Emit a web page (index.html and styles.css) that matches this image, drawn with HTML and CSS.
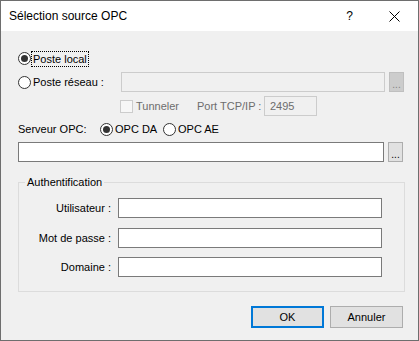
FILE: index.html
```html
<!DOCTYPE html>
<html lang="fr">
<head>
    <meta charset="UTF-8" />
    <title>Sélection source OPC</title>
    <link rel="stylesheet" href="styles.css">
</head>
<body>
<div class="window">
    <div class="titlebar">
        <span class="title">Sélection source OPC</span>
        <span class="help">?</span>
        <svg class="close" width="11" height="11" viewBox="0 0 11 11">
            <path d="M0.5 0.5 L10.5 10.5 M10.5 0.5 L0.5 10.5" stroke="#000" stroke-width="1" fill="none"/>
        </svg>
    </div>
    <div class="client">
        <div class="row row-local">
            <span class="radio checked"></span>
            <span class="label focus">Poste local</span>
        </div>
        <div class="row row-remote">
            <span class="radio"></span>
            <span class="label">Poste réseau :</span>
            <span class="textbox disabled remote-box"></span>
            <span class="browse disabled">...</span>
        </div>
        <div class="row row-tunnel">
            <span class="check disabled"></span>
            <span class="label muted tunnel-label">Tunneler</span>
            <span class="label muted port-label">Port TCP/IP :</span>
            <span class="textbox disabled port-box">2495</span>
        </div>
        <div class="row row-server">
            <span class="label server-label">Serveur OPC:</span>
            <span class="radio checked"></span>
            <span class="label da-label">OPC DA</span>
            <span class="radio"></span>
            <span class="label">OPC AE</span>
        </div>
        <div class="row row-path">
            <span class="textbox path-box"></span>
            <span class="browse">...</span>
        </div>
        <fieldset class="group">
            <legend>Authentification</legend>
            <div class="form">
                <span class="form-label">Utilisateur :</span>
                <span class="textbox"></span>
                <span class="form-label">Mot de passe :</span>
                <span class="textbox"></span>
                <span class="form-label">Domaine :</span>
                <span class="textbox"></span>
            </div>
        </fieldset>
        <div class="actions">
            <span class="button default">OK</span>
            <span class="button">Annuler</span>
        </div>
    </div>
</div>
</body>
</html>
```

FILE: styles.css
```css
body {
  margin: 0;
  font-family: "Segoe UI", "Liberation Sans", sans-serif;
  font-size: 11px;
  color: #000;
  background: #fff;
}

.window {
  box-sizing: border-box;
  width: 419px;
  height: 341px;
  border: 1px solid #6e6e6e;
  background-color: #f0f0f0;
  display: flex;
  flex-direction: column;
}

.titlebar {
  height: 30px;
  background-color: #fff;
  display: flex;
  align-items: center;
  padding-left: 8px;
  flex-shrink: 0;
}

.title {
  font-size: 12px;
  flex: 1;
}

.help {
  font-size: 12px;
  margin-right: 36px;
}

.close {
  margin-right: 18px;
}

.client {
  padding: 20px 13px 0 17px;
  display: flex;
  flex-direction: column;
}

.row {
  display: flex;
  align-items: center;
}

.row-local { height: 15px; }
.row-remote { height: 20px; margin-top: 6px; }
.row-tunnel { height: 20px; margin-top: 4px; }
.row-server { height: 16px; margin-top: 5px; }
.row-path { height: 20px; margin-top: 5px; }

.radio {
  box-sizing: border-box;
  width: 13px;
  height: 13px;
  border: 1px solid #333;
  border-radius: 50%;
  background-color: #fff;
  position: relative;
  flex-shrink: 0;
  margin-right: 2px;
}

.radio.checked::after {
  content: "";
  position: absolute;
  left: 2px;
  top: 2px;
  width: 7px;
  height: 7px;
  border-radius: 50%;
  background-color: #333;
}

.label {
  white-space: nowrap;
}

.focus {
  outline: 1px dotted #000;
  outline-offset: 1px;
}

.muted {
  color: #6d6d6d;
}

.textbox {
  box-sizing: border-box;
  height: 20px;
  border: 1px solid #7a7a7a;
  background-color: #fff;
  display: flex;
  align-items: center;
  padding-left: 5px;
}

.textbox.disabled {
  border-color: #cccccc;
  background-color: #f0f0f0;
  color: #6d6d6d;
}

.remote-box {
  width: 264px;
  margin-left: auto;
  margin-right: 4px;
}

.browse {
  box-sizing: border-box;
  width: 15px;
  height: 20px;
  border: 1px solid #adadad;
  background-color: #e1e1e1;
  font-size: 10px;
  text-align: center;
  line-height: 23px;
  flex-shrink: 0;
  margin-right: 1px;
}

.browse.disabled {
  border-color: #bfbfbf;
  background-color: #cccccc;
  color: #838383;
}

.check {
  box-sizing: border-box;
  width: 13px;
  height: 13px;
  border: 1px solid #cccccc;
  background-color: #f7f7f7;
  margin-left: 102px;
  margin-right: 3px;
}

.tunnel-label {
  width: 61px;
}

.port-label {
  width: 61px;
  margin-right: 6px;
}

.port-box {
  width: 53px;
}

.server-label {
  width: 82px;
}

.da-label {
  width: 48px;
}

.path-box {
  width: 366px;
  margin-right: 4px;
}

.group {
  box-sizing: border-box;
  margin: 13px 0 0 0;
  padding: 0;
  height: 117px;
  border: 1px solid #dcdcdc;
}

.group legend {
  padding: 0 2px;
  margin-left: 6px;
  line-height: 14px;
}

.form {
  display: grid;
  grid-template-columns: 92px 264px;
  column-gap: 7px;
  row-gap: 9.5px;
  align-items: center;
  margin-top: 9px;
}

.form-label {
  text-align: right;
}

.actions {
  display: flex;
  justify-content: flex-end;
  gap: 6px;
  margin-top: 14px;
  margin-right: 2px;
}

.button {
  box-sizing: border-box;
  width: 73px;
  height: 22px;
  border: 1px solid #adadad;
  background-color: #e1e1e1;
  display: flex;
  align-items: center;
  justify-content: center;
}

.button.default {
  border: 2px solid #0078d7;
}
```
